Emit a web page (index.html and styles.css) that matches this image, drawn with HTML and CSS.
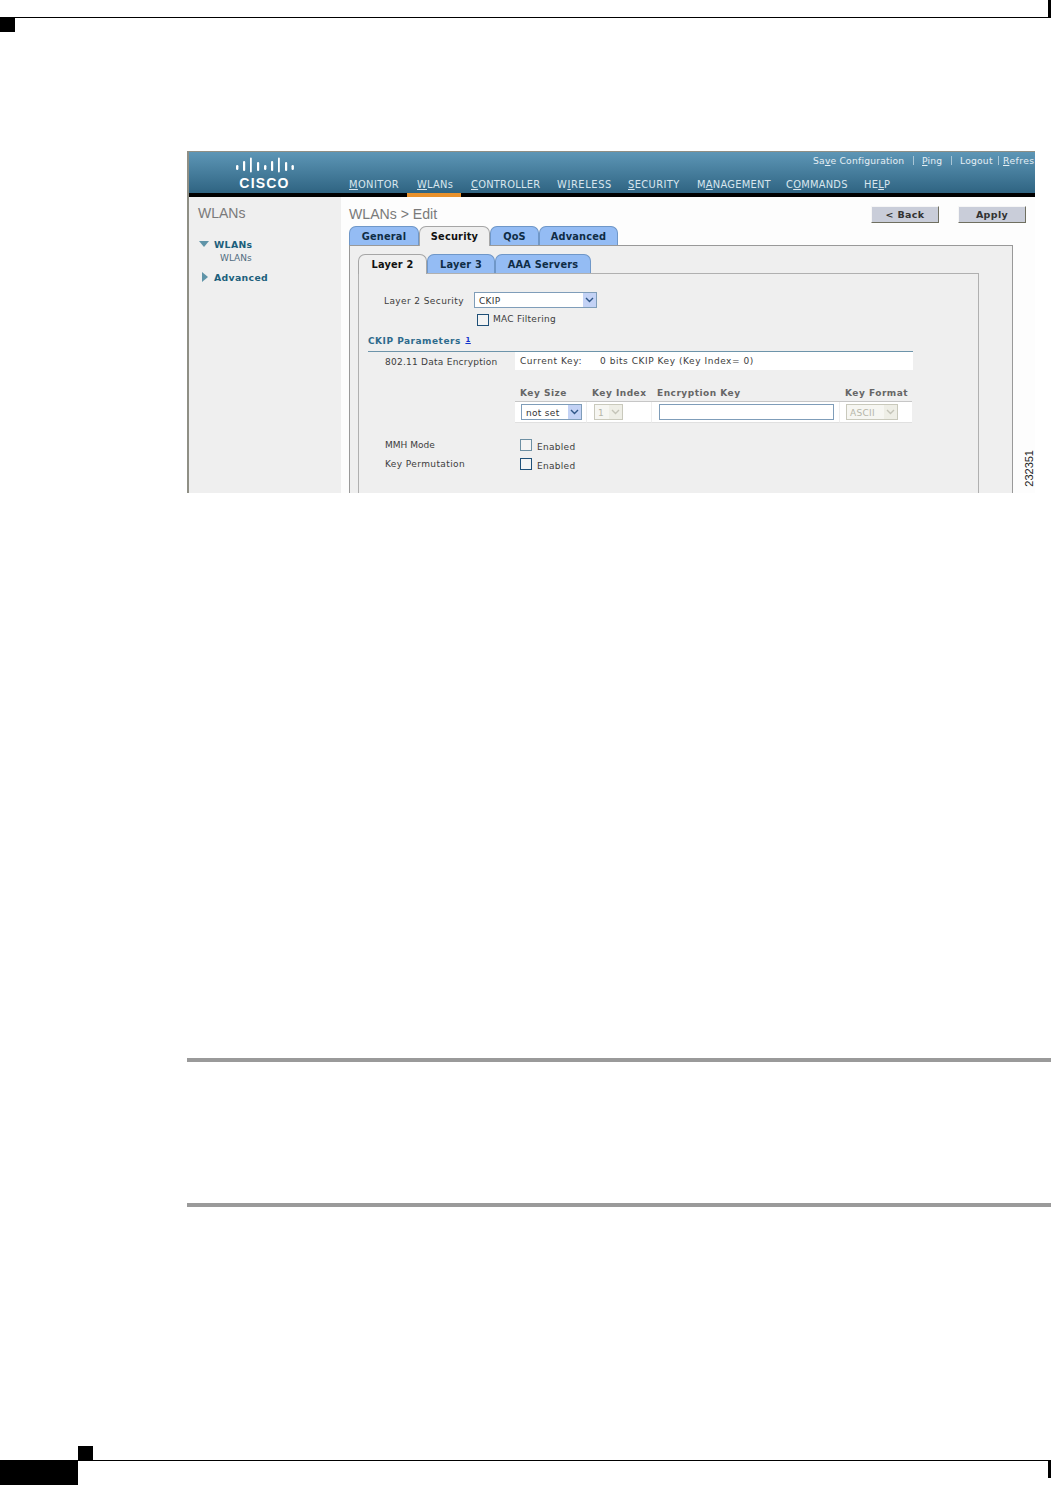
FILE: index.html
```
<!DOCTYPE html>
<html lang="en">
<head>
<meta charset="utf-8">
<title>WLANs Edit</title>
<link rel="stylesheet" href="styles.css">
</head>
<body>
<div class="page">
  <div class="top-rule"></div>
  <div class="corner"></div>

  <div class="figure">
    <header class="hdr">
      <div class="logo">
        <svg class="logo-bars" width="60" height="16" viewBox="0 0 60 16" aria-hidden="true">
          <g fill="#fff">
            <rect x="1" y="8" width="2.4" height="5" rx="1.2"/>
            <rect x="8" y="4" width="2.2" height="10" rx="1.1"/>
            <rect x="15" y="0.5" width="1.8" height="15" rx="0.9"/>
            <rect x="22" y="5" width="2.2" height="9" rx="1.1"/>
            <rect x="29" y="8" width="2.4" height="5" rx="1.2"/>
            <rect x="36" y="4" width="2.2" height="10" rx="1.1"/>
            <rect x="43" y="0.5" width="1.8" height="15" rx="0.9"/>
            <rect x="50" y="5" width="2.2" height="9" rx="1.1"/>
            <rect x="56.500" y="8" width="2.4" height="5" rx="1.2"/>
          </g>
        </svg>
        <div class="logo-text">CISCO</div>
      </div>
      <div class="hdr-main">
        <div class="toplinks">
          <span class="tl-save">Sa<u>v</u>e Configuration</span>
          <i class="sep"></i>
          <span class="tl-ping"><u>P</u>ing</span>
          <i class="sep"></i>
          <span class="tl-logout">Lo<u>g</u>out</span>
          <i class="sep"></i>
          <span class="tl-refresh"><u>R</u>efresh</span>
        </div>
        <nav class="nav">
          <span class="n1"><u>M</u>ONITOR</span>
          <span class="n2"><u>W</u>LANs</span>
          <span class="n3"><u>C</u>ONTROLLER</span>
          <span class="n4">W<u>I</u>RELESS</span>
          <span class="n5"><u>S</u>ECURITY</span>
          <span class="n6">M<u>A</u>NAGEMENT</span>
          <span class="n7">C<u>O</u>MMANDS</span>
          <span class="n8">HE<u>L</u>P</span>
        </nav>
      </div>
    </header>
    <div class="band"><div class="band-active"></div></div>

    <div class="body">
      <aside class="side">
        <div class="side-title">WLANs</div>
        <div class="tree tree-first">
          <span class="tree-icon"><svg width="10" height="6" viewBox="0 0 10 6"><path d="M0 0H10L5 6Z" fill="#5f94a8"/></svg></span>
          <span class="tree-label">WLANs</span>
        </div>
        <div class="tree-sub">WLANs</div>
        <div class="tree tree-adv">
          <span class="tree-icon tree-icon-r"><svg width="6" height="10" viewBox="0 0 6 10"><path d="M0 0L6 5L0 10Z" fill="#5f94a8"/></svg></span>
          <span class="tree-label">Advanced</span>
        </div>
      </aside>

      <main class="main">
        <div class="title-row">
          <div class="title">WLANs &gt; Edit</div>
          <div class="buttons">
            <div class="btn">&lt; Back</div>
            <div class="btn">Apply</div>
          </div>
        </div>

        <div class="tabs">
          <div class="tab t-general">General</div>
          <div class="tab active t-security">Security</div>
          <div class="tab t-qos">QoS</div>
          <div class="tab t-advanced">Advanced</div>
        </div>
        <div class="panel">
          <div class="tabs">
            <div class="tab active t-l2">Layer 2</div>
            <div class="tab t-l3">Layer 3</div>
            <div class="tab t-aaa">AAA Servers</div>
          </div>
          <div class="subpanel">
            <div class="l2-row">
              <div class="l2-label">Layer 2 Security</div>
              <div class="select sel-ckip"><span>CKIP</span><b class="arrow"><svg width="9" height="6" viewBox="0 0 9 6"><path d="M1 1L4.500 4.500L8 1" fill="none" stroke="#2f5688" stroke-width="1.400"/></svg></b></div>
            </div>
            <div class="mac-row">
              <input class="check" type="checkbox" aria-label="MAC Filtering">
              <span class="mac-label">MAC Filtering</span>
            </div>

            <div class="section">
              <div class="section-head">CKIP Parameters <a class="info">1</a></div>
              <div class="enc-row">
                <div class="enc-label">802.11 Data Encryption</div>
                <div class="enc-box">
                  <span class="enc-key">Current Key:</span>
                  <span>0 bits CKIP Key (Key Index= 0)</span>
                </div>
              </div>

              <div class="keytable">
                <div class="kh">Key Size</div>
                <div class="kh">Key Index</div>
                <div class="kh">Encryption Key</div>
                <div class="kh">Key Format</div>
                <div class="kd kd-size"><div class="select sel-size"><span>not set</span><b class="arrow"><svg width="9" height="6" viewBox="0 0 9 6"><path d="M1 1L4.500 4.500L8 1" fill="none" stroke="#2f5688" stroke-width="1.400"/></svg></b></div></div>
                <div class="kd kd-index"><div class="select off sel-index"><span>1</span><b class="arrow"><svg width="9" height="6" viewBox="0 0 9 6"><path d="M1 1L4.500 4.500L8 1" fill="none" stroke="#c4c4b8" stroke-width="1.400"/></svg></b></div></div>
                <div class="kd kd-key"><input class="keyinput" type="text" aria-label="Encryption Key"></div>
                <div class="kd kd-format"><div class="select off sel-format"><span>ASCII</span><b class="arrow"><svg width="9" height="6" viewBox="0 0 9 6"><path d="M1 1L4.500 4.500L8 1" fill="none" stroke="#c4c4b8" stroke-width="1.400"/></svg></b></div></div>
              </div>

              <div class="opt opt-first">
                <div class="opt-label opt-label-plain">MMH Mode</div>
                <input class="check check-grey" type="checkbox" aria-label="MMH Mode">
                <div class="opt-val">Enabled</div>
              </div>
              <div class="opt">
                <div class="opt-label">Key Permutation</div>
                <input class="check" type="checkbox" aria-label="Key Permutation">
                <div class="opt-val">Enabled</div>
              </div>
            </div>
          </div>
        </div>
      </main>
    </div>
    <div class="figure-id">232351</div>
  </div>

  <div class="rule rule-a"></div>
  <div class="rule rule-b"></div>

  <footer class="foot">
    <div class="foot-square"></div>
    <div class="foot-row">
      <div class="foot-block"></div>
      <div class="foot-line"><div class="foot-bar"></div></div>
    </div>
  </footer>
</div>
</body>
</html>
```
FILE: styles.css
```
html, body { margin: 0; padding: 0; background: #fff; }
.page {
  width: 1051px; height: 1485px; overflow: hidden;
  display: flex; flex-direction: column;
  font-family: "DejaVu Sans", Verdana, sans-serif;
  font-size: 9px; color: #3c3c3c;
}
u { text-decoration: underline; }

.top-rule { height: 18px; box-sizing: border-box; border-bottom: 1px solid #000; border-right: 3px solid #000; flex: none; }
.corner { width: 15px; height: 14px; background: #000; flex: none; }

.figure {
  position: relative; flex: none;
  margin: 119px 0 0 187px; width: 848px; height: 342px;
  box-sizing: border-box; overflow: hidden;
  background: #fdfdfd;
  border-top: 1px solid #8f8f85; border-left: 2px solid #8f8f85;
}
.hdr {
  height: 41px; display: flex;
  background: linear-gradient(#5d96b6, #2f6482);
}
.logo { width: 160px; flex: none; display: flex; flex-direction: column; align-items: center; padding: 5px 9px 0 0; box-sizing: border-box; }
.logo-bars { display: block; width: 60px; height: 16px; }
.logo-text { font-family: "Liberation Sans", Arial, sans-serif; font-weight: 700; font-size: 14px; line-height: 15px; letter-spacing: 1.200px; color: #fff; margin-top: 3px; }
.hdr-main { flex: 1; min-width: 0; display: flex; flex-direction: column; color: #d8e6ee; }
.toplinks { display: flex; align-items: center; height: 16px; padding-left: 464px; white-space: nowrap; font-size: 9.200px; letter-spacing: .2px; color: #e4eef4; }
.tl-save { width: 100px; flex: none; }
.sep { display: block; width: 1px; height: 9px; background: #a9c6d6; flex: none; }
.tl-ping { width: 37px; flex: none; padding-left: 8px; box-sizing: border-box; }
.tl-logout { width: 46px; padding-left: 8px; box-sizing: border-box; flex: none; }
.tl-refresh { padding-left: 4px; flex: none; letter-spacing: .45px; }
.nav { display: flex; height: 25px; align-items: flex-end; padding-bottom: 2px; box-sizing: border-box; white-space: nowrap; font-size: 9.900px; line-height: 12px; letter-spacing: .25px; }
.nav span { display: block; flex: none; }
.n1 { width: 68px; letter-spacing: .4px; }
.n2 { width: 54px; }
.n3 { width: 86px; }
.n4 { width: 71px; letter-spacing: .6px; }
.n5 { width: 69px; letter-spacing: .4px; }
.n6 { width: 89px; }
.n7 { width: 78px; }

.band { height: 4px; background: #000; }
.band-active { width: 54px; height: 4px; margin-left: 218px; background: #e8912c; }

.body { display: flex; height: 296px; }
.side { width: 152px; flex: none; background: #efefef; padding: 9px 0 0 9px; box-sizing: border-box; }
.side-title { font-family: "Liberation Sans", Arial, sans-serif; font-size: 14px; line-height: 14px; color: #7a7a7a; }
.tree { display: flex; align-items: center; height: 12px; }
.tree-first { margin-top: 18px; }
.tree-adv { margin-top: 7px; }
.tree-icon { width: 16px; flex: none; display: flex; padding-left: 1px; box-sizing: border-box; }
.tree-icon-r { padding-left: 4px; }
.tree-label { font-weight: 700; font-size: 9.300px; letter-spacing: .35px; color: #1c5f7c; }
.tree-sub { margin: 2px 0 0 22px; height: 12px; line-height: 12px; font-size: 9px; color: #4f6c80; }

.main { flex: 1; min-width: 0; padding: 9px 9px 0 8px; box-sizing: border-box; }
.title-row { display: flex; justify-content: space-between; height: 17px; }
.title { font-family: "Liberation Sans", Arial, sans-serif; font-size: 14.100px; line-height: 17px; color: #7a7a7a; }
.buttons { display: flex; gap: 19px; }
.btn {
  width: 68px; height: 17px; box-sizing: border-box;
  background: #c9cdd9; text-align: center; color: #333;
  font-weight: 700; font-size: 9.500px; line-height: 15px; letter-spacing: .35px;
  border: 1px solid #f6f6f6; border-right-color: #6f6f60; border-bottom-color: #6f6f60;
}

.tabs { display: flex; height: 19px; position: relative; margin-top: 3px; }
.panel .tabs { margin-top: 0; }
.tab {
  box-sizing: border-box; height: 19px; text-align: center;
  background: #94bcf4; color: #0f2c45;
  border: 1px solid #6f97c8; border-bottom: 0; border-radius: 7px 7px 0 0;
  font-weight: 700; font-size: 9.800px; line-height: 20px; letter-spacing: .2px;
}
.tab.active { background: #efefef; color: #111; border-color: #a6a6a6; height: 20px; position: relative; z-index: 1; }
.t-general { width: 70px; }
.t-security { width: 71px; }
.t-qos { width: 49px; }
.t-advanced { width: 79px; }
.t-l2 { width: 69px; }
.t-l3 { width: 68px; }
.t-aaa { width: 96px; }

.panel { margin-right: 13px; background: #efefef; border: 1px solid #999; border-bottom: 0; height: 260px; box-sizing: border-box; padding: 8px 33px 0 8px; }
.subpanel { background: #efefef; border: 1px solid #b0b0b0; border-bottom: 0; height: 240px; box-sizing: border-box; padding: 18px 0 0 9px; letter-spacing: .3px; }

.l2-row { display: flex; height: 16px; align-items: center; padding-left: 16px; }
.l2-label { width: 90px; flex: none; letter-spacing: .4px; padding-top: 1px; }
.select {
  display: flex; align-items: center; justify-content: space-between;
  height: 16px; box-sizing: border-box; background: #fff;
  border: 1px solid #7f9db9; padding-left: 4px; color: #333;
}
.select span { padding-top: 1px; }
.arrow { display: flex; align-items: center; justify-content: center; width: 13px; height: 14px; background: #c3d2f5; flex: none; }
.select.off { border-color: #c9c9bc; color: #b5b5a8; background: #f6f6f2; padding-left: 3px; }
.select.off .arrow { background: #eeeee6; }
.sel-ckip { width: 123px; }
.sel-size { width: 61px; }
.sel-index { width: 29px; }
.sel-format { width: 52px; }

.check { appearance: none; -webkit-appearance: none; display: block; margin: 0; width: 12px; height: 12px; box-sizing: border-box; background: #f4f4f4; border: 1px solid #1f5078; flex: none; }
.check-grey { border-color: #6d8fa3; }
.mac-row { display: flex; align-items: flex-start; height: 12px; margin: 6px 0 0 109px; }
.mac-label { margin-left: 4px; line-height: 10px; }

.section { width: 545px; }
.section-head { height: 18px; margin-top: 7px; box-sizing: border-box; line-height: 14px; font-weight: 700; font-size: 9px; letter-spacing: .5px; color: #2e6a8c; }
.info { font-size: 7px; color: #1133cc; text-decoration: underline; vertical-align: 2px; margin-left: 1px; }
.enc-row { display: flex; border-top: 1px solid #6d94aa; }
.enc-label { width: 147px; flex: none; padding: 4px 0 0 17px; box-sizing: border-box; line-height: 12px; letter-spacing: .25px; }
.enc-box { flex: 1; display: flex; height: 18px; background: #fff; line-height: 19px; padding-left: 5px; letter-spacing: .55px; }
.enc-key { display: block; width: 80px; flex: none; }

.keytable {
  display: grid; grid-template-columns: 72px 65px 188px 72px;
  margin: 15px 0 0 147px; width: 397px;
}
.kh { height: 17px; line-height: 16px; padding-left: 5px; border-bottom: 1px solid #c6c6c6; font-weight: 700; font-size: 9px; letter-spacing: .5px; color: #666; white-space: nowrap; }
.kh, .kd { box-sizing: border-box; }
.kd { height: 21px; background: #fff; padding-top: 2px; border-bottom: 1px solid #e0e0e0; border-right: 1px solid #eee; }
.kd-size { padding-left: 6px; }
.kd-index { padding-left: 7px; }
.kd-key { padding-left: 7px; }
.kd-format { padding-left: 6px; border-right: 0; }
.keyinput { display: block; width: 175px; height: 16px; box-sizing: border-box; margin: 0; padding: 0; background: #fff; border: 1px solid #7f9db9; }

.opt { display: flex; height: 19px; align-items: flex-start; }
.opt-first { margin-top: 16px; }
.opt-label { width: 152px; flex: none; padding-left: 17px; box-sizing: border-box; line-height: 13px; letter-spacing: .4px; }
.opt-label-plain { letter-spacing: 0; }
.opt-val { margin-left: 5px; padding-top: 2px; line-height: 13px; }

.figure-id {
  position: absolute; right: 1px; top: 298px;
  writing-mode: vertical-rl; transform: rotate(180deg);
  font-family: "Liberation Sans", Arial, sans-serif; font-size: 11px; line-height: 10px; color: #222;
}

.rule { flex: none; height: 4px; margin-left: 187px; background: #9a9a9a; }
.rule-a { margin-top: 565px; }
.rule-b { margin-top: 141px; }

.foot { margin-top: auto; flex: none; }
.foot-square { width: 15px; height: 14px; margin-left: 78px; background: #000; }
.foot-row { display: flex; height: 25px; }
.foot-block { width: 78px; background: #000; flex: none; }
.foot-line { flex: 1; border-top: 1px solid #000; display: flex; justify-content: flex-end; }
.foot-bar { width: 3px; height: 17px; background: #000; }
```
